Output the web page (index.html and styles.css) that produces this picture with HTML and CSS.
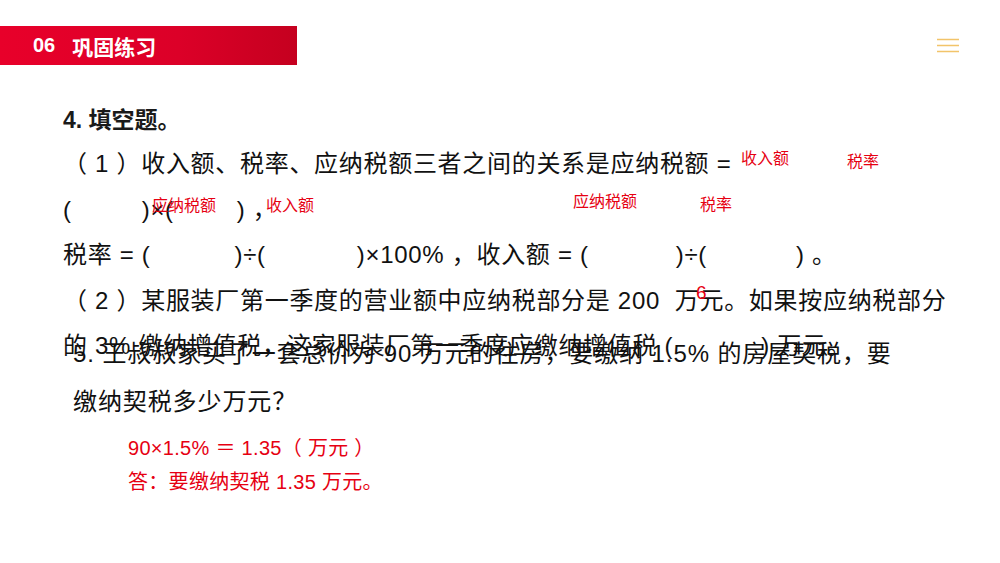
FILE: index.html
```html
<!DOCTYPE html>
<html lang="zh">
<head>
<meta charset="utf-8">
<link rel="stylesheet" href="styles.css">
</head>
<body>
<div class="slide">
  <div class="header">
    <span class="num">06</span><span class="title">巩固练习</span>
  </div>
  <div class="menu">
    <svg width="24" height="16" viewBox="0 0 24 16"><path d="M1 2.5H23M1 8.5H23M1 14.5H23" stroke="#f2c46a" stroke-width="1.6" fill="none"/></svg>
  </div>

  <div class="q4">
    <div class="q-title">4. 填空题。</div>
    <div class="body">
      <div class="line">（ 1 ）收入额、税率、应纳税额三者之间的关系是应纳税额 =</div>
      <div class="line">(<span class="blank w1"></span>)×(<span class="blank w2"></span>) ，</div>
      <div class="line">税率 = (<span class="blank w3"></span>)÷(<span class="blank w4"></span>)×100% ，收入额 = (<span class="blank w5"></span>)÷(<span class="blank w6"></span>) 。</div>
      <div class="line">（ 2 ）某服装厂第一季度的营业额中应纳税部分是 200&nbsp; 万元。如果按应纳税部分</div>
      <div class="line">的 3% 缴纳增值税，这家服装厂第一季度应缴纳增值税 (<span class="blank w7"></span>) 万元。</div>
    </div>
  </div>

  <div class="q5">
    <div class="line5">5. 王叔叔家买了一套总价为 90 万元的住房，要缴纳 1.5% 的房屋契税，要</div>
    <div class="line5">缴纳契税多少万元？</div>
  </div>

  <div class="answer">
    <div class="ans-line">90×1.5% ＝ 1.35（ 万元 ）</div>
    <div class="ans-line">答：要缴纳契税 1.35 万元。</div>
  </div>

  <span class="note a1">收入额</span>
  <span class="note a2">税率</span>
  <span class="note a3">应纳税额</span>
  <span class="note a4">税率</span>
  <span class="note a5">应纳税额</span>
  <span class="note a6">收入额</span>
  <span class="note six">6</span>
</div>
</body>
</html>
```

FILE: styles.css
```css
html, body {
  margin: 0;
  padding: 0;
  background: #ffffff;
}

.slide {
  position: relative;
  width: 1000px;
  height: 563px;
  overflow: hidden;
  background: #ffffff;
  font-family: "Liberation Sans", "Noto Sans CJK SC", sans-serif;
  color: #111111;
}

.header {
  margin-top: 26px;
  width: 297px;
  height: 39px;
  background: linear-gradient(90deg, #e8002a 0%, #dc0028 60%, #c5001f 100%);
  display: flex;
  align-items: center;
  padding-left: 33px;
  box-sizing: border-box;
  color: #ffffff;
  font-weight: bold;
  font-size: 20px;
}

.header .num {
  margin-right: 17px;
}

.header .title {
  font-size: 21px;
}

.menu {
  position: absolute;
  left: 936px;
  top: 37px;
  line-height: 0;
}

.q4 {
  margin-top: 40px;
  padding-left: 63px;
}

.q-title {
  font-weight: bold;
  font-size: 23px;
  line-height: 30px;
  height: 30px;
  color: #1a1a1a;
}

.body {
  margin-top: 6px;
  font-size: 24px;
  letter-spacing: 0.7px;
  line-height: 45.5px;
  white-space: nowrap;
}

.line {
  height: 45.5px;
}

.blank {
  display: inline-block;
}

.w1 { width: 70px; }
.w2 { width: 63px; }
.w3 { width: 84px; }
.w4 { width: 91px; }
.w5 { width: 87px; }
.w6 { width: 89px; }
.w7 { width: 88px; }

.q5 {
  position: absolute;
  left: 73px;
  top: 330px;
  font-size: 24px;
  letter-spacing: 0.9px;
  line-height: 48px;
  white-space: nowrap;
}

.answer {
  position: absolute;
  left: 128px;
  top: 431px;
  color: #e60012;
  font-size: 20px;
  line-height: 34px;
  letter-spacing: 0.3px;
  white-space: nowrap;
}

.note {
  position: absolute;
  color: #e60012;
  font-size: 16px;
  line-height: 20px;
  white-space: nowrap;
}

.a1 { left: 741px; top: 149px; }
.a2 { left: 847px; top: 152px; }
.a3 { left: 573px; top: 192px; }
.a4 { left: 700px; top: 195px; }
.a5 { left: 152px; top: 196px; }
.a6 { left: 266px; top: 196px; }

.six {
  left: 696px;
  top: 282px;
  font-size: 19px;
  line-height: 22px;
}
```
